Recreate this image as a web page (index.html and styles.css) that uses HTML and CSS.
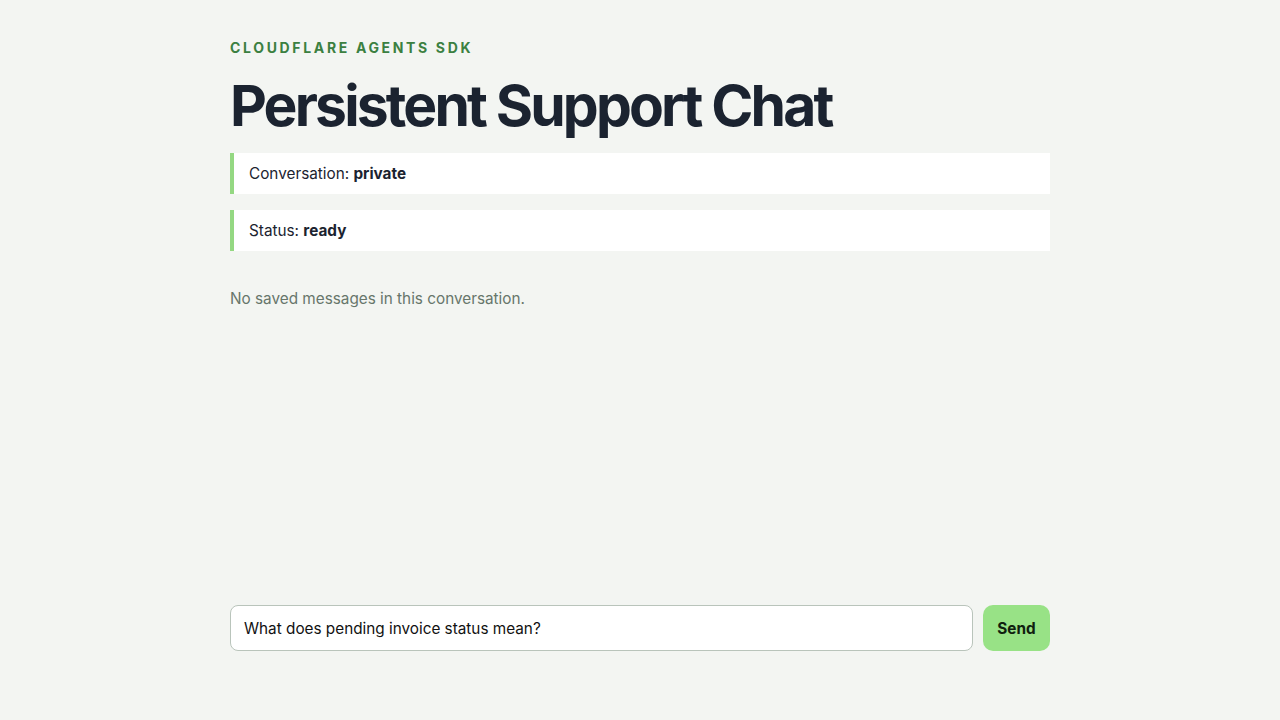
FILE: index.html
```html
<!DOCTYPE html>
<html>
    <head>
        <title>Persistent Support Chat</title>
        <meta name="viewport" content="width=device-width, initial-scale=1">
        <link rel="stylesheet" href="styles.css">
    </head>
    <body>
        <main class="shell">
            <header class="head">
                <p class="kicker">Cloudflare Agents SDK</p>
                <h1 class="title">Persistent Support Chat</h1>
            </header>

            <div class="meta">Conversation: <strong>private</strong></div>
            <div class="meta">Status: <strong>ready</strong></div>

            <section class="messages">
                <p class="empty">No saved messages in this conversation.</p>
            </section>

            <form class="composer" onsubmit="return false">
                <input class="composer-input" type="text" value="What does pending invoice status mean?">
                <button class="composer-send" type="submit">Send</button>
            </form>
        </main>
    </body>
</html>
```

FILE: styles.css
```css
html {
    height: 100%;
    background: #f3f5f2;
    font-family: Inter, "Noto Sans", sans-serif;
    color: #1b2330;
}

body {
    margin: 0;
    height: 100%;
}

.shell {
    box-sizing: border-box;
    width: 820px;
    height: 100%;
    margin: 0 auto;
    padding: 39px 0 69px;
    display: flex;
    flex-direction: column;
}

.kicker {
    margin: 0;
    font-size: 14px;
    font-weight: 700;
    letter-spacing: 0.19em;
    text-transform: uppercase;
    color: #3b8041;
}

.title {
    margin: 19px 0 15px;
    font-size: 57px;
    line-height: 1.1;
    font-weight: 700;
    letter-spacing: -0.05em;
    color: #1b2330;
}

.meta {
    background: #fff;
    border-left: 4px solid #94d882;
    padding: 11px 15px;
    font-size: 15.3px;
    line-height: 19px;
    margin-bottom: 16px;
}

.meta strong {
    font-weight: 700;
}

.messages {
    flex: 1;
    padding-top: 22px;
}

.empty {
    margin: 0;
    font-size: 15.3px;
    color: #67766b;
}

.composer {
    display: flex;
    gap: 10px;
}

.composer-input {
    flex: 1;
    height: 46px;
    box-sizing: border-box;
    padding: 0 13px;
    border: 1px solid #b9c4bb;
    border-radius: 8px;
    background: #fff;
    font-family: inherit;
    font-size: 15.3px;
    color: #111;
}

.composer-send {
    width: 67px;
    height: 46px;
    border: 0;
    border-radius: 10px;
    background: #98e286;
    font-family: inherit;
    font-size: 15.3px;
    font-weight: 700;
    color: #10200f;
    cursor: pointer;
}
```
